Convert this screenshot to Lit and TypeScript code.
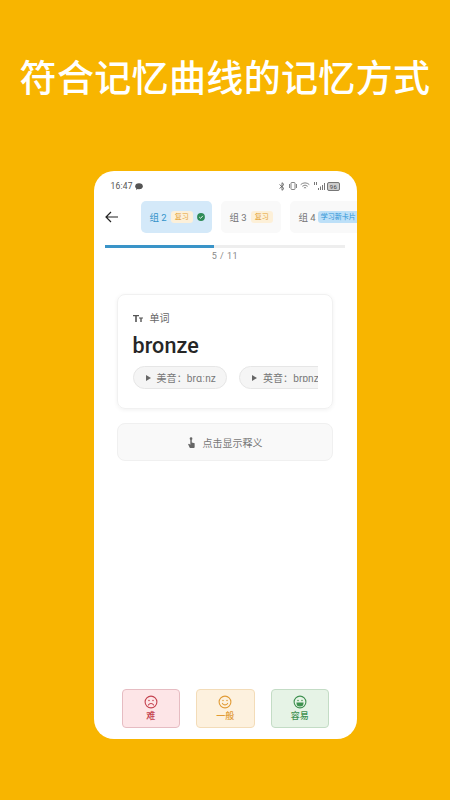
import { LitElement, html, css } from "lit";
import { customElement } from "lit/decorators.js";

const face = (mouth: string, fill = false) => html`<svg class="face" viewBox="0 0 14 14" fill="none" stroke="currentColor" stroke-width="1.1" stroke-linecap="round">
  <circle cx="7" cy="7" r="5.9"></circle>
  <circle cx="5" cy="5.4" r=".75" fill="currentColor" stroke="none"></circle><circle cx="9" cy="5.4" r=".75" fill="currentColor" stroke="none"></circle>
  <path d=${mouth} fill=${fill ? "currentColor" : "none"}></path></svg>`;

@customElement("app-root")
export class AppRoot extends LitElement {
  static styles = css`
    :host { display: block; width: 450px; height: 800px; overflow: hidden; background: #f8b500; font-family: Roboto, "Noto Sans CJK SC", sans-serif; color: #222; }
    .page { height: 800px; display: flex; flex-direction: column; align-items: center; }
    h1 { margin: 0; padding-top: 53px; height: 171px; box-sizing: border-box; font: 500 37px/46px "Noto Sans CJK SC", sans-serif; letter-spacing: .35px; color: #fff; white-space: nowrap; }
    .phone { width: 263px; height: 568px; background: #fff; border-radius: 20px; overflow: hidden; display: flex; flex-direction: column; }
    .status { height: 30px; flex: none; padding: 0 17px; display: flex; align-items: center; justify-content: space-between; font-size: 8.5px; color: #555; letter-spacing: .2px; }
    .left, .right { display: flex; align-items: center; gap: 2px; }
    .right { gap: 2.5px; color: #666; }
    .batt { font-size: 6px; line-height: 7px; padding: 0 1.5px; border: 1px solid #777; border-radius: 2px; background: #ccc; color: #444; }
    .nav { height: 32px; flex: none; display: flex; align-items: center; padding-left: 11px; gap: 23px; overflow: hidden; }
    .back { width: 13px; height: 12px; flex: none; }
    .tabs { display: flex; gap: 9px; }
    .tab { height: 32px; box-sizing: border-box; border-radius: 5px; background: #f9f9f9; color: #777; font-size: 9.5px; display: flex; align-items: center; gap: 4px; padding: 0 9px; white-space: nowrap; flex: none; }
    .tab.on { background: #d4e9f9; color: #3593c9; width: 71px; padding-right: 0; }
    .tab.g3 { width: 60px; padding-right: 0; }
    .tag { font-size: 7px; line-height: 12px; padding: 0 4px; border-radius: 3px; background: #fdf0d8; color: #e4a230; }
    .on .tag { background: #fcf0da; }
    .tag.new { background: #bde0f8; color: #2f94d6; padding: 0 3px; margin-left: -2px; }
    .check { width: 8px; height: 8px; flex: none; margin-left: 0; }
    .progress { flex: none; margin: 12px 12px 0 11px; height: 3px; background: #eee; }
    .fill { height: 100%; background: #3a94c8; }
    .count { flex: none; text-align: center; font-size: 9px; line-height: 14px; color: #888; letter-spacing: .5px; margin-top: 1px; margin-bottom: 31px; }
    .card { flex: none; box-sizing: border-box; width: 216px; height: 115px; margin-left: 23px; border-radius: 8px; border: 1px solid #f1f1f1; box-shadow: 0 1px 4px rgba(0,0,0,.06); padding: 15px 14px 0 15px; }
    .label { display: flex; align-items: center; gap: 7px; font-size: 10px; line-height: 17px; color: #666; }
    .tt { width: 10px; height: 7px; flex: none; }
    .word { font-size: 21.5px; line-height: 28px; font-weight: 500; letter-spacing: .1px; color: #262626; margin-top: 5px; }
    .chips { display: flex; gap: 12px; overflow: hidden; margin-top: 6px; }
    .chip { flex: none; height: 23px; box-sizing: border-box; border: 1px solid #e6e6e6; background: #f5f5f5; border-radius: 12px; display: flex; align-items: center; gap: 6px; padding: 0 10px 0 12px; font-size: 10px; letter-spacing: .1px; color: #777; white-space: nowrap; }
    .tri { width: 0; height: 0; border-left: 5px solid #666; border-top: 3px solid transparent; border-bottom: 3px solid transparent; flex: none; }
    .reveal { flex: none; box-sizing: border-box; width: 216px; height: 38px; margin: 14px 0 0 23px; border-radius: 8px; border: 1px solid #f0f0f0; background: #f9f9f9; display: flex; align-items: center; justify-content: center; gap: 7px; font-size: 10px; color: #777; }
    .hand { width: 9px; height: 11px; flex: none; }
    .actions { margin-top: auto; margin-bottom: 11px; padding-left: 28px; display: flex; gap: 16px; }
    .act { width: 58.5px; height: 39px; box-sizing: border-box; border-radius: 4px; border: 1px solid; display: flex; flex-direction: column; align-items: center; justify-content: center; gap: 2px; font-size: 9px; line-height: 11px; font-weight: 500; }
    .face { width: 14px; height: 14px; }
    .hard { background: #fde5e7; border-color: #e6bcc2; color: #c4424f; }
    .mid { background: #fdf1de; border-color: #f3dcb8; color: #e19b36; }
    .easy { background: #e6f3e6; border-color: #c3dcc5; color: #3f9150; }
  `;

  render() {
    return html`<div class="page">
      <h1>符合记忆曲线的记忆方式</h1>
      <div class="phone">
        <div class="status">
          <div class="left">16:47
            <svg width="8" height="7" viewBox="0 0 8 7"><ellipse cx="4" cy="3.2" rx="3.8" ry="3" fill="#555"></ellipse><path d="M1.5 5 1 7 3 5.8Z" fill="#555"></path></svg>
          </div>
          <div class="right">
            <svg width="6" height="9" viewBox="0 0 6 9" fill="none" stroke="#555" stroke-width=".8"><path d="M.5 2.5 5 6.5 3 8.3V.7L5 2.5.5 6.5"></path></svg>
            <svg width="10" height="8" viewBox="0 0 10 8" fill="none" stroke="#666" stroke-width=".8"><rect x="3" y=".5" width="4" height="7" rx=".8"></rect><path d="M1.5 2v4M8.5 2v4"></path></svg>
            <svg width="10" height="8" viewBox="0 0 10 8" fill="none" stroke="#666" stroke-width=".8"><path d="M.7 2.6a6.2 6.2 0 0 1 8.6 0M2.3 4.3a4 4 0 0 1 5.4 0M3.9 6a1.6 1.6 0 0 1 2.2 0"></path></svg>
            <svg width="12" height="8" viewBox="0 0 12 8" fill="#777"><path d="M5 6h1v2H5zM7 4.5h1V8H7zM9 3h1v5H9zM11 1h1v7h-1zM1 0h1v3H1zM3 0h1v3H3z"></path></svg>
            <span class="batt">96</span>
          </div>
        </div>
        <div class="nav">
          <svg class="back" viewBox="0 0 13 12" fill="none" stroke="#222" stroke-width="1.2"><path d="M13 6H1M6 1 1 6l5 5"></path></svg>
          <div class="tabs">
            <div class="tab on">组 2 <span class="tag">复习</span>
              <svg class="check" viewBox="0 0 9 9"><circle cx="4.5" cy="4.5" r="4.4" fill="#2e8b57"></circle><path d="M2.5 4.6 4 6l2.6-2.8" fill="none" stroke="#fff" stroke-width="1"></path></svg>
            </div>
            <div class="tab g3">组 3 <span class="tag">复习</span></div>
            <div class="tab">组 4 <span class="tag new">学习新卡片</span></div>
          </div>
        </div>
        <div class="progress"><div class="fill" style="width:45.45%"></div></div>
        <div class="count">5 / 11</div>
        <div class="card">
          <div class="label">
            <svg class="tt" viewBox="0 0 10 7" fill="#555"><path d="M0 0h6v1.2H3.8V7H2.2V1.2H0zM6 2.5h4v1.1H8.7V7H7.3V3.6H6z"></path></svg>
            单词
          </div>
          <div class="word">bronze</div>
          <div class="chips">
            <div class="chip"><span class="tri"></span>美音：brɑːnz</div>
            <div class="chip"><span class="tri"></span>英音：brɒnz</div>
          </div>
        </div>
        <div class="reveal">
          <svg class="hand" viewBox="0 0 10 12" fill="#666"><circle cx="4.5" cy="1.7" r="1.5"></circle><path d="M3.7 3h1.6v3l3.2.8V11a1 1 0 0 1-1 1H3.2L1.2 8l1-.6 1.5 1.2z"></path></svg>
          点击显示释义
        </div>
        <div class="actions">
          <div class="act hard">${face("M4.4 10a3 3 0 0 1 5.2 0")}难</div>
          <div class="act mid">${face("M4.4 8.4a3 3 0 0 0 5.2 0")}一般</div>
          <div class="act easy">${face("M4 8h6a3 3 0 0 1-6 0Z", true)}容易</div>
        </div>
      </div>
    </div>`;
  }
}
